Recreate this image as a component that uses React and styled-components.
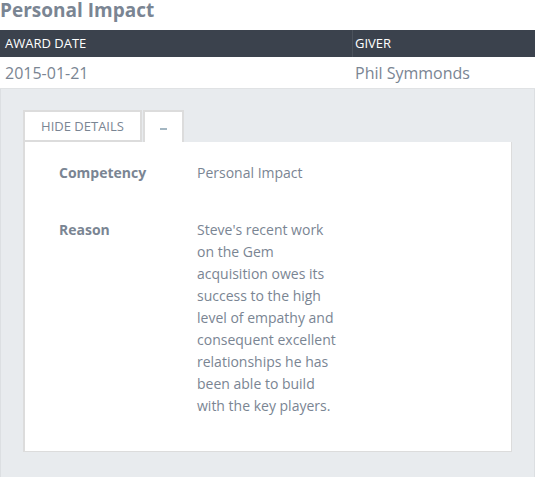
import React from "react";
import styled, { createGlobalStyle } from "styled-components";

const Global = createGlobalStyle`
  html, body { margin: 0; padding: 0; background: #fff; }
  body { font-family: "Open Sans", "Noto Sans", sans-serif; color: #7a8593; }
  * { box-sizing: border-box; }
`;

const Page = styled.div`
  width: 535px;
  height: 477px;
  overflow: hidden;
`;

const Title = styled.h2`
  margin: -9px 0 0 0;
  font-size: 19px;
  line-height: 39px;
  font-weight: 700;
  color: #7a8593;
`;

const Table = styled.div`
  display: grid;
  grid-template-columns: 352px 1fr;
`;

const HeadCell = styled.div`
  background: #3b424d;
  color: #ffffff;
  font-size: 13px;
  height: 27px;
  line-height: 27px;
  text-transform: uppercase;
  border-left: ${(p) => (p.$divider ? "1px solid #4b525c" : "none")};
  padding-left: ${(p) => (p.$divider ? "2px" : "5px")};
`;

const BodyCell = styled.div`
  background: #fff;
  font-size: 16px;
  height: 32px;
  line-height: 32px;
  padding-left: ${(p) => (p.$indent ? "3px" : "5px")};
  color: #7a8593;
  border-bottom: 1px solid #e0e2e4;
`;

const Detail = styled.div`
  background: #e8ebee;
  border-left: 1px solid #dcdfe2;
  border-right: 1px solid #dcdfe2;
  padding: 21px 23px 40px 22px;
  height: 389px;
`;

const Tabs = styled.div`
  display: flex;
  align-items: flex-end;
`;

const Tab = styled.button`
  font-family: inherit;
  font-size: 13px;
  color: #7a8593;
  text-transform: uppercase;
  background: #fff;
  border: 2px solid #dcdcdc;
  height: 32px;
  margin: 0;
  padding: 0;
  cursor: pointer;
  ${(p) =>
    p.$active
      ? `border-bottom: none; width: 41px; margin-left: 1px;`
      : `width: 119px; text-align: center;`}
`;

const Dash = styled.span`
  display: inline-block;
  width: 7px;
  height: 2px;
  background: #a3b6c2;
  vertical-align: middle;
`;

const Panel = styled.div`
  background: #fff;
  border: 1px solid #dcdcdc;
  border-left-width: 2px;
  border-top: none;
  width: 489px;
  height: 310px;
  padding: 20px 0 0 34px;
`;

const Row = styled.div`
  display: grid;
  grid-template-columns: 138px 143px;
  margin-bottom: 35px;
  font-size: 14px;
  line-height: 22px;
`;

const Label = styled.div`
  font-weight: 700;
  color: #7a8593;
`;

const Value = styled.div`
  color: #7a8593;
`;

export default function App() {
  return (
    <>
      <Global />
      <Page>
        <Title>Personal Impact</Title>
        <Table>
          <HeadCell>Award Date</HeadCell>
          <HeadCell $divider>Giver</HeadCell>
          <BodyCell>2015-01-21</BodyCell>
          <BodyCell $indent>Phil Symmonds</BodyCell>
        </Table>
        <Detail>
          <Tabs>
            <Tab>Hide Details</Tab>
            <Tab $active aria-label="collapse">
              <Dash />
            </Tab>
          </Tabs>
          <Panel>
            <Row>
              <Label>Competency</Label>
              <Value>Personal Impact</Value>
            </Row>
            <Row>
              <Label>Reason</Label>
              <Value>
                Steve's recent work on the Gem acquisition owes its success to
                the high level of empathy and consequent excellent
                relationships he has been able to build with the key players.
              </Value>
            </Row>
          </Panel>
        </Detail>
      </Page>
    </>
  );
}
